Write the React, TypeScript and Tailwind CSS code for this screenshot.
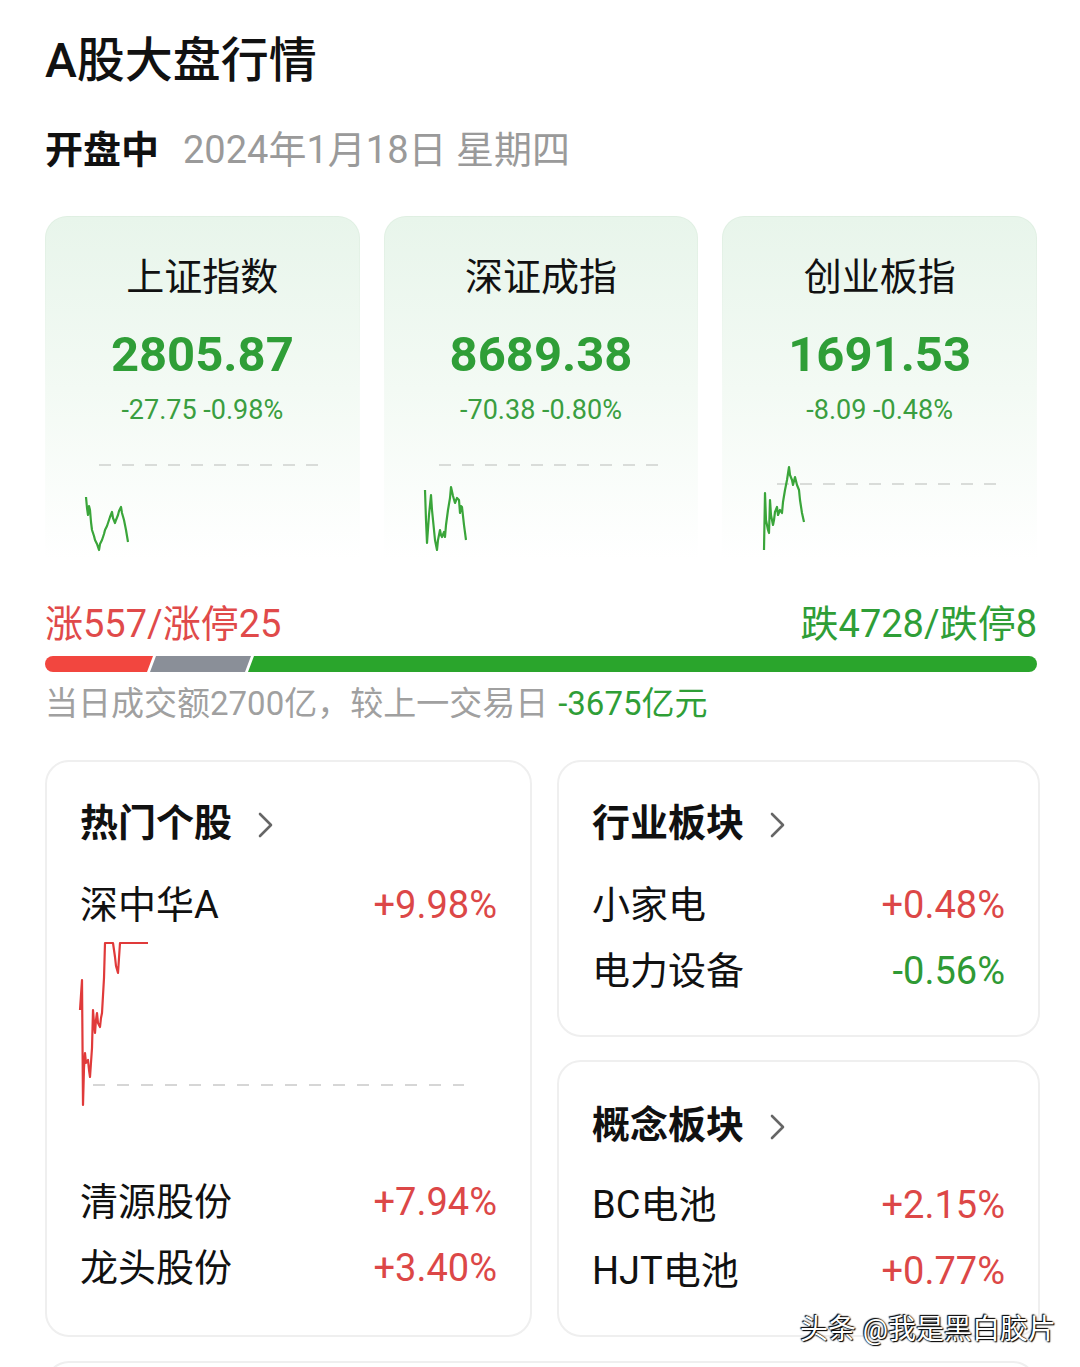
import React from "react";

const idx = [
  {
    name: "上证指数",
    value: "2805.87",
    change: "-27.75 -0.98%",
    dashY: 25,
    dashX1: 53,
    pts: "40,57 41,68 42,75 43,66 44,70 45,82 46,90 48,96 49,100 51,104 53,110 54,104 56,100 58,94 59,90 61,86 63,80 64,77 66,72 67,78 69,83 70,80 72,75 73,71 75,67 76,73 78,80 80,90 82,102",
  },
  {
    name: "深证成指",
    value: "8689.38",
    change: "-70.38 -0.80%",
    dashY: 25,
    dashX1: 54,
    pts: "40,50 41,80 42,103 44,75 46,55 47,70 49,90 50,100 52,110 53,100 55,90 56,95 57,97 59,92 60,97 61,85 63,70 65,58 66,47 68,56 70,63 72,58 74,60 75,73 76,66 77,67 79,85 81,100",
  },
  {
    name: "创业板指",
    value: "1691.53",
    change: "-8.09 -0.48%",
    dashY: 44,
    dashX1: 54,
    pts: "41,110 42,53 43,80 45,90 46,93 47,60 48,75 50,85 51,80 52,72 54,67 55,75 57,70 59,73 60,62 62,50 64,40 66,27 67,35 69,40 70,45 72,37 74,45 76,50 77,60 79,73 81,82",
  },
];

function Chevron() {
  return (
    <svg width="20" height="28" viewBox="0 0 20 28" className="ml-[24px] mt-[4px]">
      <polyline points="4,3 15,14 4,25" fill="none" stroke="#666" strokeWidth="2.6" strokeLinecap="round" strokeLinejoin="round" />
    </svg>
  );
}

function Row({ name, value, up }: { name: string; value: string; up: boolean }) {
  return (
    <div className="flex h-[66px] items-center justify-between text-[38px] leading-none text-[#111]">
      <span>{name}</span>
      <span className={up ? "text-[#dc4747]" : "text-[#2f9a35]"}>{value}</span>
    </div>
  );
}

function Header({ title }: { title: string }) {
  return (
    <div className="flex h-[66px] items-center text-[38px] font-bold leading-none text-[#111]">
      <span>{title}</span>
      <Chevron />
    </div>
  );
}

export default function App() {
  return (
    <div className="relative min-h-[1367px] overflow-hidden bg-white pl-[45px] pr-[40px] pt-[31px] font-['Roboto','Noto_Sans_CJK_SC',sans-serif]">
      <div className="h-[60px] text-[48px] font-medium leading-[60px] text-[#111]">A股大盘行情</div>
      <div className="mt-[34px] flex h-[50px] items-center text-[38px] leading-none">
        <span className="font-bold text-[#111]">开盘中</span>
        <span className="ml-[24px] text-[#9a9a9a]">2024年1月18日 星期四</span>
      </div>

      <div className="mr-[3px] mt-[41px] grid grid-cols-3 gap-[24px]">
        {idx.map((c) => (
          <div key={c.name} className="rounded-t-[22px] bg-linear-to-b from-[#dfefe2] via-[#f4faf5] to-white px-[1px] pt-[1px]">
            <div className="flex h-[343px] flex-col items-center rounded-t-[21px] bg-linear-to-b from-[#e8f5eb] via-[#f3faf4] to-white pt-[38px]">
              <div className="h-[44px] text-[38px] leading-[44px] text-[#111]">{c.name}</div>
              <div className="mt-[26px] h-[60px] text-[49px] font-bold leading-[60px] text-[#2f9e37]">{c.value}</div>
              <div className="mt-[9px] h-[32px] text-[27px] leading-[32px] text-[#3a9e40]">{c.change}</div>
              <svg width="314" height="120" viewBox="0 0 314 120" className="mt-[14px] self-start">
                <line x1={c.dashX1} y1={c.dashY} x2="276" y2={c.dashY} stroke="#d9dcd9" strokeWidth="2" strokeDasharray="12 11" />
                <polyline points={c.pts} fill="none" stroke="#3aa53a" strokeWidth="2.2" strokeLinejoin="round" />
              </svg>
            </div>
          </div>
        ))}
      </div>

      <div className="mr-[3px] mt-[41px] flex h-[46px] items-center justify-between text-[38px] leading-none">
        <span className="text-[#e04a4a]">涨557/涨停25</span>
        <span className="text-[#2f9e37]">跌4728/跌停8</span>
      </div>
      <div className="mr-[3px] mt-[9px] flex h-[16px]">
        <div className="h-full w-[108px] rounded-l-full bg-[#f2463f] [clip-path:polygon(0_0,100%_0,calc(100%-6px)_100%,0_100%)]" />
        <div className="ml-[-3px] h-full w-[101px] bg-[#8a8f98] [clip-path:polygon(6px_0,100%_0,calc(100%-6px)_100%,0_100%)]" />
        <div className="ml-[-3px] h-full flex-1 rounded-r-full bg-[#2aa52c] [clip-path:polygon(6px_0,100%_0,100%_100%,0_100%)]" />
      </div>
      <div className="mt-[11px] flex h-[40px] items-center text-[33px] leading-none text-[#a0a0a0]">
        <span>当日成交额2700亿，较上一交易日</span>
        <span className="ml-[10px] text-[#2f9e37]">-3675亿元</span>
      </div>

      <div className="mt-[37px] grid grid-cols-[487px_483px] gap-[25px]">
        <div className="h-[577px] rounded-[24px] border-2 border-[#efefef] bg-white px-[33px] pt-[28px]">
          <Header title="热门个股" />
          <div className="mt-[16px]">
            <Row name="深中华A" value="+9.98%" up />
          </div>
          <svg width="417" height="231" viewBox="0 0 417 231" className="overflow-visible">
            <line x1="13" y1="147" x2="384" y2="147" stroke="#d6d6d6" strokeWidth="2" strokeDasharray="12 12" />
            <polyline
              points="0,72 2,42 3,167 4,130 5,115 6,125 8,122 9,132 10,139 12,110 13,72 14,85 15,95 16,82 17,75 18,85 20,89 21,80 22,75 24,40 25,5 33,5 34,12 35,19 36,28 38,35 39,20 40,5 68,5"
              fill="none"
              stroke="#e03a3a"
              strokeWidth="2.2"
              strokeLinejoin="round"
            />
          </svg>
          <Row name="清源股份" value="+7.94%" up />
          <Row name="龙头股份" value="+3.40%" up />
        </div>

        <div className="flex flex-col gap-[23px]">
          <div className="h-[277px] rounded-[24px] border-2 border-[#efefef] bg-white px-[33px] pt-[28px]">
            <Header title="行业板块" />
            <div className="mt-[16px]">
              <Row name="小家电" value="+0.48%" up />
              <Row name="电力设备" value="-0.56%" up={false} />
            </div>
          </div>
          <div className="h-[277px] rounded-[24px] border-2 border-[#efefef] bg-white px-[33px] pt-[30px]">
            <Header title="概念板块" />
            <div className="mt-[14px]">
              <Row name="BC电池" value="+2.15%" up />
              <Row name="HJT电池" value="+0.77%" up />
            </div>
          </div>
        </div>
      </div>

      <div className="mr-[3px] mt-[24px] h-[80px] rounded-t-[24px] border-2 border-b-0 border-[#efefef]" />

      <div className="absolute right-[24px] top-[1310px] text-[28px] leading-[40px] text-white [text-shadow:0_0_2px_#000,1px_1px_1px_#000,-1px_-1px_1px_#000]">
        头条 @我是黑白胶片
      </div>
    </div>
  );
}
